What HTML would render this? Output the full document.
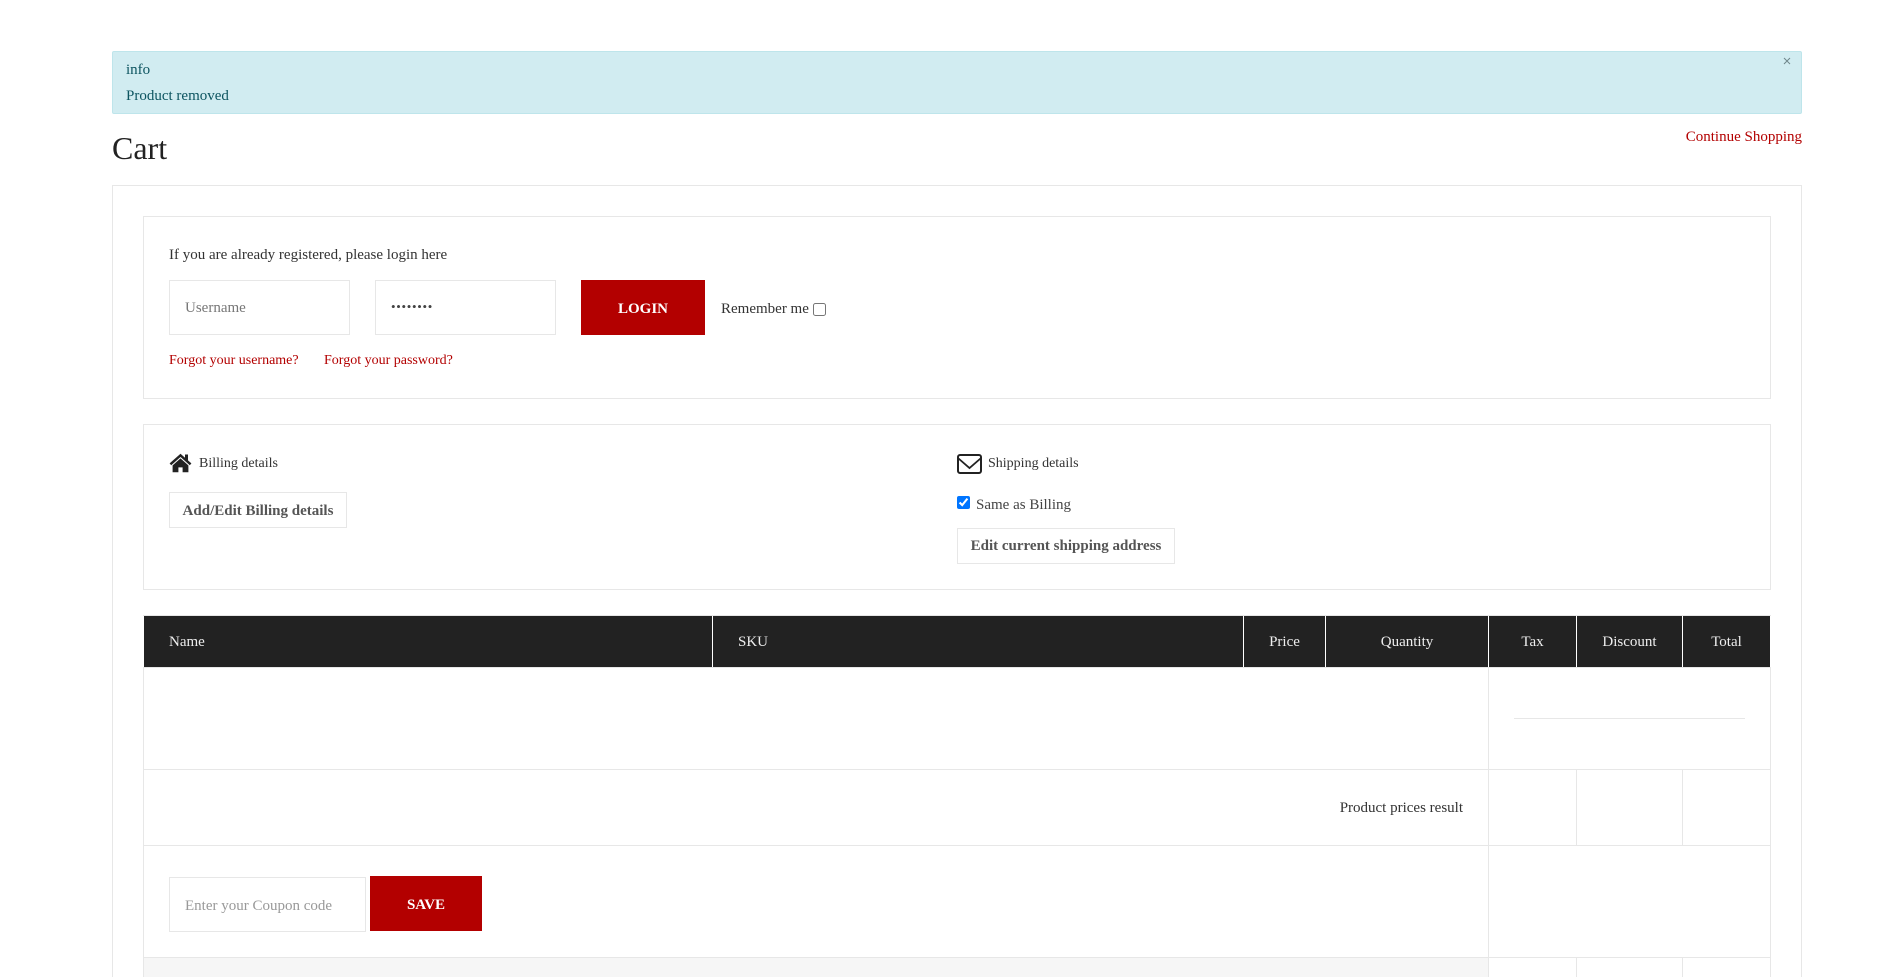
<!DOCTYPE html>
<html lang="en">
<head>
<meta charset="utf-8">
<title>Cart</title>
<style>
html,body{margin:0;padding:0;background:#fff;width:1878px;height:977px;overflow:hidden;}
#w{position:relative;width:1878px;height:977px;overflow:hidden;font-family:"Liberation Serif",serif;font-size:15px;color:#333;contain:paint;}
.a{position:absolute;box-sizing:border-box;}
.t{position:absolute;white-space:nowrap;line-height:20px;height:20px;}
.red{color:#b30000;}
.box{border:1px solid #e7e7e7;background:#fff;}
.h{position:absolute;background:#e7e7e7;height:1px;}
.v{position:absolute;background:#e7e7e7;width:1px;}
.wv{position:absolute;background:#fff;width:1px;top:616px;height:51px;}
.th{color:#eee;text-align:center;top:632px;}
.btn{position:absolute;box-sizing:border-box;background:#b30000;color:#fff;font-weight:bold;text-align:center;}
.obtn{position:absolute;box-sizing:border-box;border:1px solid #e7e7e7;color:#555;font-weight:bold;text-align:center;height:36px;line-height:35px;white-space:nowrap;}
</style>
</head>
<body>
<div id="w">
<!-- alert -->
<div class="a" style="left:112px;top:51px;width:1690px;height:63px;background:#d1ecf1;border:1px solid #bee5eb;border-radius:2px;"></div>
<span class="t" style="left:126px;top:60px;color:#0c5460;">info</span>
<span class="t" style="left:126px;top:86px;color:#0c5460;">Product removed</span>
<svg class="a" style="left:1783px;top:57px;" width="8" height="8" viewBox="0 0 8 8"><path d="M1 1L7 7M7 1L1 7" stroke="#6f868b" stroke-width="1" fill="none"/></svg>

<span class="t" style="left:112px;top:128px;font-size:32px;line-height:40px;height:40px;color:#222;">Cart</span>
<span class="t red" style="right:76px;top:127px;">Continue Shopping</span>

<!-- card -->
<div class="a box" style="left:112px;top:185px;width:1690px;height:792px;border-bottom:0;"></div>

<!-- login -->
<div class="a box" style="left:143px;top:216px;width:1628px;height:183px;"></div>
<span class="t" style="left:169px;top:245px;color:#333;">If you are already registered, please login here</span>
<div class="a box" style="left:169px;top:280px;width:181px;height:55px;"></div>
<span class="t" style="left:185px;top:298px;color:#777;font-size:15px;">Username</span>
<div class="a box" style="left:375px;top:280px;width:181px;height:55px;"></div>
<span class="t" style="left:391px;top:297px;color:#444;font-size:13px;letter-spacing:.7px;">••••••••</span>
<div class="btn" style="left:581px;top:280px;width:124px;height:55px;line-height:58px;">LOGIN</div>
<span class="t" style="left:721px;top:299px;color:#333;">Remember me</span>
<input class="a" type="checkbox" style="left:813px;top:303px;width:13px;height:13px;margin:0;">
<span class="t red" style="left:169px;top:351px;font-size:14px;">Forgot your username?</span>
<span class="t red" style="left:324px;top:351px;font-size:14px;">Forgot your password?</span>

<!-- addresses -->
<div class="a box" style="left:143px;top:424px;width:1628px;height:166px;"></div>
<svg class="a" style="left:169px;top:453px;" width="23" height="20" viewBox="0 0 23 20"><path fill="#222" d="M11.5 0.8L0.6 10.4L2.2 12.2L11.5 4L20.8 12.2L22.4 10.4L19 7.4V1.5H16V4.8Z"/><path fill="#222" d="M3.6 12.4L11.5 5.4L19.4 12.4V19.2H13.6V14.4H9.4V19.2H3.6Z"/></svg>
<span class="t" style="left:199px;top:454px;font-size:14px;color:#333;">Billing details</span>
<div class="obtn" style="left:169px;top:492px;width:178px;line-height:36px;">Add/Edit Billing details</div>

<svg class="a" style="left:957px;top:454px;" width="25" height="20" viewBox="0 0 25 20"><rect x="1" y="1" width="23" height="18" rx="2" fill="none" stroke="#222" stroke-width="2"/><path d="M1.5 4.5L12.5 14L23.5 4.5" fill="none" stroke="#222" stroke-width="1.8"/></svg>
<span class="t" style="left:988px;top:454px;font-size:14px;color:#333;">Shipping details</span>
<input class="a" type="checkbox" checked style="left:957px;top:496px;width:13px;height:13px;margin:0;">
<span class="t" style="left:976px;top:495px;color:#444;">Same as Billing</span>
<div class="obtn" style="left:957px;top:528px;width:218px;">Edit current shipping address</div>

<!-- table -->
<div class="a" style="left:143px;top:615px;width:1628px;height:1px;background:#e7e7e7;"></div>
<div class="a" style="left:144px;top:616px;width:1626px;height:51px;background:#222;"></div>
<div class="h" style="left:143px;top:667px;width:1628px;"></div>
<div class="wv" style="left:712px;"></div>
<div class="wv" style="left:1243px;"></div>
<div class="wv" style="left:1325px;"></div>
<div class="wv" style="left:1488px;"></div>
<div class="wv" style="left:1576px;"></div>
<div class="wv" style="left:1682px;"></div>
<span class="t" style="left:169px;top:632px;color:#eee;">Name</span>
<span class="t" style="left:738px;top:632px;color:#eee;">SKU</span>
<span class="t th" style="left:1244px;width:81px;">Price</span>
<span class="t th" style="left:1326px;width:162px;">Quantity</span>
<span class="t th" style="left:1489px;width:87px;">Tax</span>
<span class="t th" style="left:1577px;width:105px;">Discount</span>
<span class="t th" style="left:1683px;width:87px;">Total</span>

<div class="v" style="left:143px;top:667px;height:310px;"></div>
<div class="v" style="left:1770px;top:667px;height:310px;"></div>
<div class="v" style="left:1488px;top:667px;height:310px;"></div>
<div class="h" style="left:1514px;top:718px;width:231px;"></div>
<div class="h" style="left:143px;top:769px;width:1628px;"></div>
<div class="h" style="left:143px;top:845px;width:1628px;"></div>
<div class="h" style="left:143px;top:957px;width:1628px;"></div>
<div class="v" style="left:1576px;top:769px;height:76px;"></div>
<div class="v" style="left:1682px;top:769px;height:76px;"></div>
<div class="v" style="left:1576px;top:957px;height:20px;"></div>
<div class="v" style="left:1682px;top:957px;height:20px;"></div>
<span class="t" style="right:415px;top:798px;color:#333;">Product prices result</span>

<div class="a box" style="left:169px;top:877px;width:197px;height:55px;"></div>
<span class="t" style="left:185px;top:896px;color:#999;">Enter your Coupon code</span>
<div class="btn" style="left:370px;top:876px;width:112px;height:55px;line-height:58px;">SAVE</div>
<div class="a" style="left:144px;top:958px;width:1344px;height:19px;background:#f6f6f6;"></div>
</div>
</body>
</html>
